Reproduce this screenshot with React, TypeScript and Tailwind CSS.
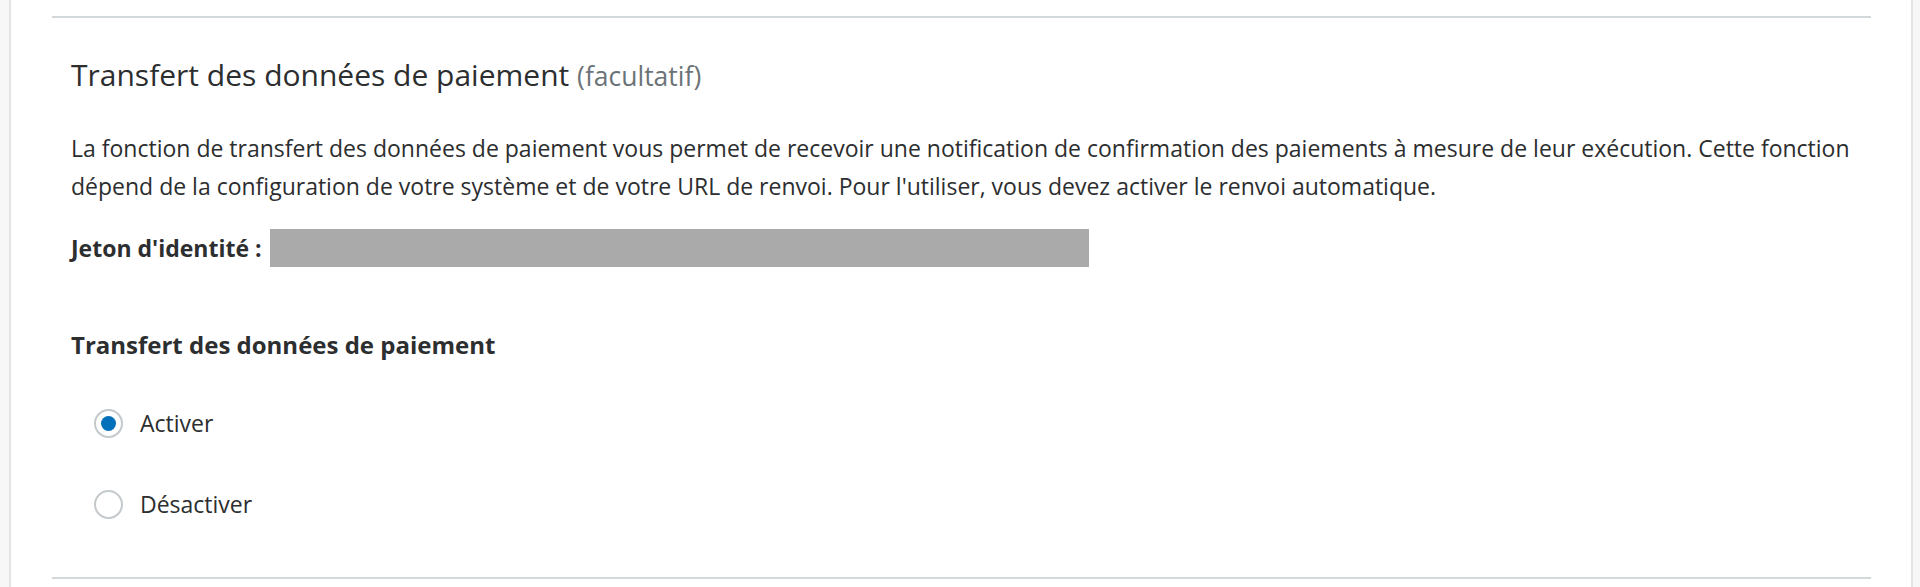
import React from "react";

function Radio({ checked, label }: { checked: boolean; label: string }) {
  return (
    <div className="flex h-[38px] items-center">
      <div className="ml-[23px] flex h-[29px] w-[29px] items-center justify-center rounded-full border-2 border-[#c4c9cc] bg-white">
        {checked && <div className="h-[15px] w-[15px] rounded-full bg-[#0070ba]" />}
      </div>
      <span className="ml-[17px] text-[23px] leading-[38px] text-[#2c2e2f]">{label}</span>
    </div>
  );
}

export default function App() {
  return (
    <div
      className="flex h-[587px] w-full overflow-hidden bg-[#f7f7f7]"
      style={{ fontFamily: '"Open Sans", "Noto Sans", sans-serif' }}
    >
      <div className="ml-[9px] mr-[7px] flex-1 border-x-2 border-[#e4e4e4] bg-white pl-[41px] pr-[40px]">
        <div className="mt-[16px] h-[2px] bg-[#d3d8db]" />
        <section className="pl-[19px]">
          <h2 className="mt-[39px] text-[30px] leading-[36px] text-[#2c2e2f]">
            Transfert des données de paiement{" "}
            <span className="text-[26.5px] text-[#6c7378]">(facultatif)</span>
          </h2>
          <p className="mt-[35px] text-[23px] leading-[38px] text-[#2c2e2f]">
            La fonction de transfert des données de paiement vous permet de recevoir une notification de confirmation des paiements à mesure de leur exécution. Cette fonction dépend de la configuration de votre système et de votre URL de renvoi. Pour l'utiliser, vous devez activer le renvoi automatique.
          </p>
          <div className="mt-[24px] flex h-[38px] items-center">
            <span className="text-[23px] font-bold leading-[38px] text-[#2c2e2f]">Jeton d'identité :</span>
            <div className="ml-[8px] h-[38px] w-[819px] bg-[#aaaaaa]" />
          </div>
          <h3 className="mt-[59px] text-[24px] font-bold leading-[38px] text-[#2c2e2f]">
            Transfert des données de paiement
          </h3>
          <div className="mt-[40px] flex flex-col gap-[43px]">
            <Radio checked label="Activer" />
            <Radio checked={false} label="Désactiver" />
          </div>
        </section>
        <div className="mt-[54px] h-[2px] bg-[#d3d8db]" />
      </div>
    </div>
  );
}
